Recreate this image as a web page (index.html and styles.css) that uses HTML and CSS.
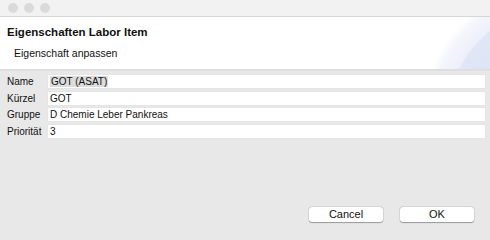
FILE: index.html
```html
<!DOCTYPE html>
<html>
<head>
<meta charset="utf-8">
<link rel="stylesheet" href="styles.css">
</head>
<body>
<div class="window">
  <div class="titlebar">
    <span class="light"></span><span class="light"></span><span class="light"></span>
  </div>
  <div class="header">
    <div class="title">Eigenschaften Labor Item</div>
    <div class="subtitle">Eigenschaft anpassen</div>
  </div>
  <div class="sep"></div>
  <div class="form">
    <label class="lbl">Name</label><div class="field"><span class="sel">GOT (ASAT)</span></div>
    <label class="lbl">Kürzel</label><div class="field">GOT</div>
    <label class="lbl">Gruppe</label><div class="field">D Chemie Leber Pankreas</div>
    <label class="lbl">Priorität</label><div class="field">3</div>
  </div>
  <div class="buttons">
    <button class="btn">Cancel</button>
    <button class="btn">OK</button>
  </div>
</div>
</body>
</html>
```
FILE: styles.css
```css
html, body {
  margin: 0;
  padding: 0;
  width: 490px;
  height: 240px;
  overflow: hidden;
  background: #e8e8e8;
}
.window {
  width: 490px;
  height: 240px;
  display: flex;
  flex-direction: column;
  font-family: "Liberation Sans", Arial, sans-serif;
  font-size: 10px;
  color: #111;
  background: #e8e8e8;
}
.titlebar {
  height: 16px;
  background: #f2f2f2;
  border-bottom: 1px solid #d6d6d6;
  display: flex;
  align-items: center;
  gap: 6px;
  padding-left: 8px;
}
.light {
  width: 10px;
  height: 10px;
  border-radius: 50%;
  background: #dadada;
}
.header {
  height: 52px;
  background:
    radial-gradient(circle at 560px 103px, #dbe2f5 0px, #e0e6f6 112px, #edf0fa 114px, #f4f6fc 130px, rgba(255,255,255,0) 138px),
    #fff;
  padding-left: 7px;
  display: flex;
  flex-direction: column;
}
.title {
  font-weight: bold;
  font-size: 11.5px;
  margin-top: 9px;
  line-height: 13px;
}
.subtitle {
  font-size: 10.5px;
  margin-top: 8px;
  margin-left: 7px;
  line-height: 13px;
}
.sep {
  height: 2px;
  background: #dedede;
}
.form {
  display: grid;
  grid-template-columns: 41px 437px;
  grid-auto-rows: 13px;
  row-gap: 3.67px;
  padding: 4px 0 0 7px;
}
.lbl {
  line-height: 13px;
  white-space: nowrap;
}
.field {
  background: #fff;
  line-height: 13px;
  padding-left: 2px;
  box-shadow: 0 0 0 0.5px #e2e2e2;
}
.sel {
  background: #dcdcdc;
  padding: 0 1px;
}
.buttons {
  display: flex;
  justify-content: flex-end;
  gap: 17px;
  margin-top: auto;
  margin-bottom: 18px;
  padding-right: 16px;
}
.btn {
  width: 74px;
  height: 15px;
  padding: 0;
  border: none;
  border-radius: 3px;
  background: #fff;
  box-shadow: 0 0.5px 1px rgba(0,0,0,0.3), 0 0 0 0.5px rgba(0,0,0,0.12);
  font-family: "Liberation Sans", Arial, sans-serif;
  font-size: 11px;
  color: #111;
  line-height: 15px;
}
```
